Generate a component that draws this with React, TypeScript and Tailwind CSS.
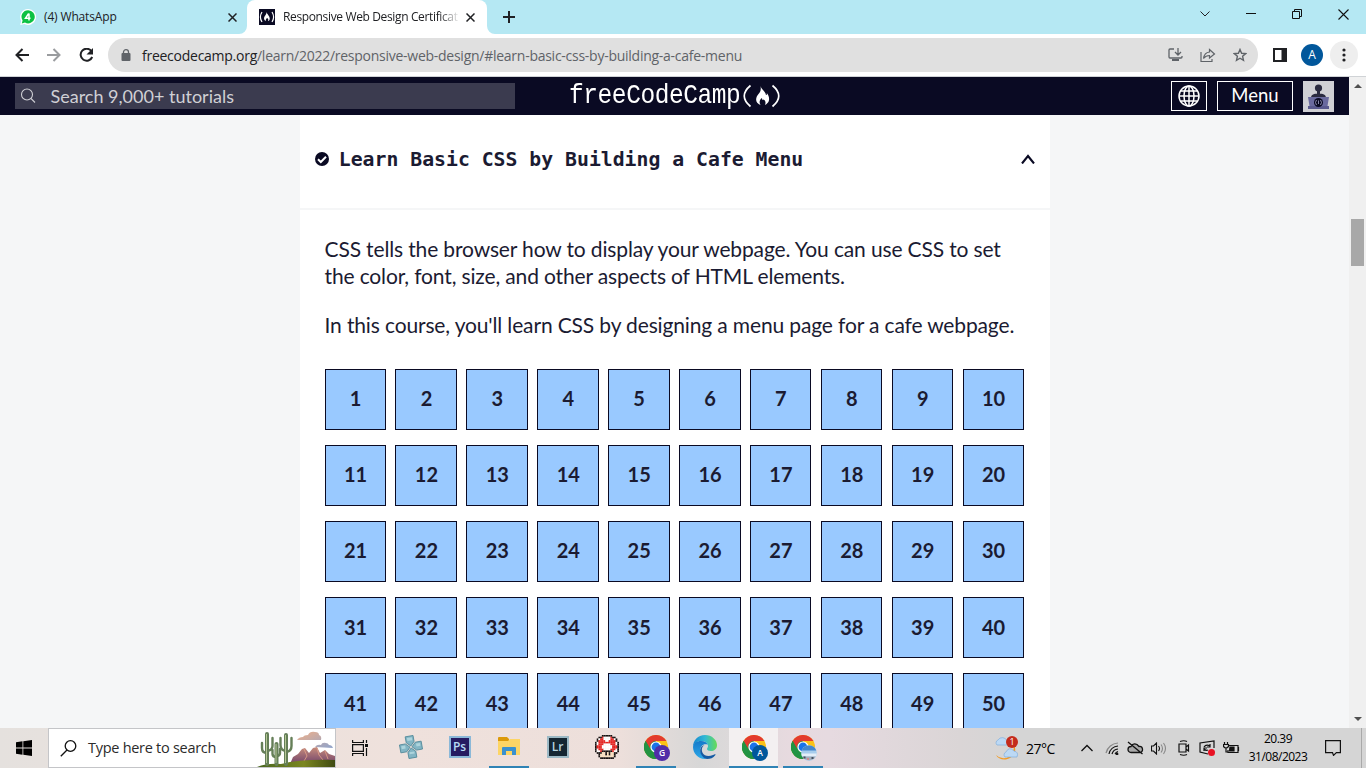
import React from "react";

const ui = "font-['Open_Sans','Noto_Sans',sans-serif]";
const lato = "font-[Lato,sans-serif]";

function TabStrip() {
  return (
    <div className={`flex h-[34px] w-full bg-[#b5e8f3] ${ui} text-[12px] text-[#202124]`}>
      <div className="flex h-full w-[247px] items-center pl-[20px]">
        <svg width="16" height="16" viewBox="0 0 16 16">
          <path d="M8 0a8 8 0 1 1-3.6 15.1L.2 16l1-4A8 8 0 0 1 8 0z" fill="#fff" />
          <path d="M8.2 1.2a6.6 6.6 0 1 1-3.2 12.4l-3.2.9.8-3.1A6.6 6.6 0 0 1 8.200 1.200z" fill="#0cc143" />
          <path d="M8.700 4.500 5.500 9.200h5M9 4.500v7" fill="none" stroke="#fff" strokeWidth="1.500" />
        </svg>
        <span className="ml-[8px] w-[184px] whitespace-nowrap tracking-[-0.15px]">(4) WhatsApp</span>
        <CloseX />
      </div>
      <div className="relative flex h-full w-[240px] items-center rounded-t-[8px] bg-white pl-[12px]">
        <svg className="absolute bottom-0 -left-[8px]" width="8" height="8"><path d="M8 0v8H0a8 8 0 0 0 8-8z" fill="#fff" /></svg>
        <svg className="absolute bottom-0 -right-[8px]" width="8" height="8"><path d="M0 0v8h8a8 8 0 0 1-8-8z" fill="#fff" /></svg>
        <svg width="16" height="16" viewBox="0 0 16 16">
          <rect width="16" height="16" fill="#0a0a23" />
          <path d="M3 3Q-.2 8 3 13M13 3q3.200 5 0 10" fill="none" stroke="#fff" strokeWidth="1.200" />
          <path d="M7.500 3c.5 2.500 3.800 4.300 3.200 7.200-.2 1-1 1.800-1.700 1.800.8-1.200.2-2.500-1-3-.9 1-1.600 2 -1 3-3-1.200-2-4.500-.4-6C7.300 5 7.600 4 7.500 3z" fill="#fff" />
        </svg>
        <div className="ml-[8px] w-[177px] whitespace-nowrap tracking-[-0.36px] [mask-image:linear-gradient(to_right,black_88%,transparent)]">
          Responsive Web Design Certificat
        </div>
        <div className="ml-[6px]"><CloseX /></div>
      </div>
      <svg className="ml-[16px] mt-[11px]" width="12" height="12"><path d="M6 0v12M0 6h12" stroke="#202124" strokeWidth="2" /></svg>
      <div className="ml-auto flex h-[28px] items-center pr-[17px]">
        <svg className="mr-[36px]" width="10" height="6"><path d="M.5.500 5 5 9.500.500" fill="none" stroke="#202124" /></svg>
        <svg className="mr-[36px]" width="10" height="2"><path d="M0 .500h10" stroke="#111" /></svg>
        <svg className="mr-[36px]" width="10" height="10"><path d="M.5 2.500h7v7h-7zM2.500 2.500v-2h7v7h-2" fill="none" stroke="#111" /></svg>
        <svg width="11" height="11"><path d="m.5.500 10 10m0-10-10 10" stroke="#111" strokeWidth="1.100" /></svg>
      </div>
    </div>
  );
}

function CloseX() {
  return <svg width="9" height="9"><path d="m.5.500 8 8m0-8-8 8" stroke="#202124" strokeWidth="1.500" /></svg>;
}

function Toolbar() {
  return (
    <div className="flex h-[43px] w-full items-center border-b border-[#d0d3d6] bg-white pl-[15px]">
      <svg width="14" height="14"><path d="M14 7H1.500M7.500 1l-6 6 6 6" fill="none" stroke="#202124" strokeWidth="2" /></svg>
      <svg className="ml-[18px]" width="14" height="14"><path d="M0 7h12.500M6.500 1l6 6-6 6" fill="none" stroke="#9a9c9f" strokeWidth="2" /></svg>
      <svg className="ml-[18px]" width="15" height="15"><path d="M12.500 3.200A6 6 0 1 0 13.200 9" fill="none" stroke="#202124" strokeWidth="2" /><path d="M14 0v6.500H7.500z" fill="#202124" /></svg>
      <div className={`ml-[14px] flex h-[34px] w-[1150px] items-center rounded-full bg-[#e0e0e0] pl-[13px] ${ui}`}>
        <svg width="10" height="12" viewBox="0 0 10 12"><rect x=".5" y="4" width="9" height="8" rx="1" fill="#5f6368" /><path d="M2.500 5V3a2.500 2.300 0 0 1 5 0v2" fill="none" stroke="#5f6368" strokeWidth="1.300" /></svg>
        <span className="ml-[11px] whitespace-nowrap text-[14px] tracking-[-0.26px] text-[#5f6368]"><span className="text-[#202124]">freecodecamp.org</span>/learn/2022/responsive-web-design/#learn-basic-css-by-building-a-cafe-menu</span>
        <div className="ml-auto flex items-center pr-[11px] text-[#5f6368]">
          <svg width="15" height="14" fill="none" stroke="currentColor" strokeWidth="1.300"><path d="M6 1H2Q1 1 1 2v7q0 1 1 1h11q1 0 1-1V8M10 0v6M7 4l3 3 3-3" /><path d="M4 12h7" strokeWidth="2" /></svg>
          <svg className="ml-[17px]" width="16" height="15" fill="none" stroke="currentColor" strokeWidth="1.200"><path d="M1 4v9.500h11V11M9.500 1.500l5 4.500-5 4V7.500c-3 0-4.500 1-6 3 .5-3.500 2-6 6-6.500z" /></svg>
          <svg className="ml-[17px]" width="14" height="14" viewBox="0 0 14 14" fill="none" stroke="currentColor" strokeWidth="1.400"><path d="m7 1.500 1.600 3.800 4.100.3-3.100 2.700.9 4L7 10.200l-3.500 2.100.9-4L1.300 5.600l4.100-.3z" /></svg>
        </div>
      </div>
      <svg className="ml-[15px]" width="14" height="14"><path d="M1 1h12v12H1z" fill="none" stroke="#202124" strokeWidth="2" /><path d="M8.500 1H14v12H8.500z" fill="#202124" /></svg>
      <div className={`ml-[14px] flex size-[22px] items-center justify-center rounded-full bg-[#01579b] text-[12px] text-white ${ui}`}>A</div>
      <div className="ml-[7px] flex size-[28px] items-center justify-center rounded-full bg-[#eeeeee]">
        <svg width="4" height="14" fill="#202124"><circle cx="2" cy="2" r="1.600" /><circle cx="2" cy="7" r="1.600" /><circle cx="2" cy="12" r="1.600" /></svg>
      </div>
    </div>
  );
}

function NavBar() {
  return (
    <div className={`flex h-[38px] w-full items-center bg-[#0a0a23] text-white ${lato}`}>
      <div className="ml-[15px] flex h-[26px] w-[500px] items-center bg-[#3b3b4f] pl-[5px] text-[18px] text-[#d0d0d5]">
        <svg width="16" height="16" fill="none" stroke="#d0d0d5" strokeWidth="1.100"><circle cx="7" cy="6.500" r="5.500" /><path d="m11 10.500 4 4" /></svg>
        <span className="ml-[14.500px] whitespace-nowrap">Search 9,000+ tutorials</span>
      </div>
      <div className="ml-[54px] flex h-full w-[212px] items-center">
        <span className="w-[173px] origin-center scale-y-[1.120] whitespace-nowrap font-['Liberation_Mono',monospace] text-[24.500px] leading-none tracking-[-0.420px]">freeCodeCamp</span>
        <svg className="mt-[-1px]" width="39" height="26" viewBox="0 0 39 26">
          <path d="M8.500 2.500Q-4 13 8.500 23.500M30.500 2.500q12.500 10.500 0 21" fill="none" stroke="#fff" strokeWidth="1.700" />
          <path d="M18.500 3c1 3.500 5 6 5.500 9 1 .3 1-1 .7-2 2.500 3 3.500 7 .8 10-.8.900-1.500 1.500-2.500 2 1-2.500.5-4.500-1.500-5.500-.5 1-1.500.5-1.500-1.500-2 1.500-3 3.500-2 6 .2.500.5.800.8 1.200-6-2-5.500-7.500-2.500-11 2-2.300 3-4.500 2.200-8.200z" fill="#fff" />
        </svg>
      </div>
      <div className="ml-[390px] flex h-[30px] w-[36px] items-center justify-center border border-white">
        <svg width="22" height="22" viewBox="0 0 22 22" fill="none" stroke="#fff" strokeWidth="1.500"><circle cx="11" cy="11" r="10" /><ellipse cx="11" cy="11" rx="5" ry="10" /><path d="M11 1v20M1 11h20M2.500 6h17M2.500 16h17" /></svg>
      </div>
      <div className="ml-[10px] flex h-[30px] w-[76px] items-center justify-center border border-white pb-px text-[18.500px]">Menu</div>
      <div className="ml-[10px] h-[31px] w-[31px] bg-[#d0d0d5]">
        <svg width="31" height="31" viewBox="0 0 31 31">
          <circle cx="15.500" cy="7" r="3.600" fill="#2a2a40" /><path d="M14 9h3v4h-3zM8 17c0-4 3-4 7.500-4.500C20 13 23 13 23 17z" fill="#2a2a40" />
          <path d="M5 16h21l-1.500 9h-18z" fill="#6a6a9e" /><path d="M5 25h21v3H5z" fill="#5a5a8e" />
          <circle cx="15.500" cy="21.500" r="4.500" fill="#0a0a23" /><path d="M13.500 19q-2 2.500 0 5M17.500 19q2 2.500 0 5M15.500 19.500v3.500" fill="none" stroke="#aaaacb" strokeWidth=".8" />
        </svg>
      </div>
      <div className="ml-auto flex h-full w-[17px] justify-center bg-[#f0f0f0] pt-[7px]"><svg width="8" height="4"><path d="m0 4 4-4 4 4z" fill="#505050" /></svg></div>
    </div>
  );
}

const numbers = Array.from({ length: 50 }, (_, i) => i + 1);

function Course() {
  return (
    <div className={`flex h-[613px] w-full overflow-hidden bg-[#f5f6f7] text-[#1b1b32] ${lato}`}>
      <div className="ml-[300px] h-full w-[750px] overflow-hidden bg-white">
        <div className="flex h-[95px] items-start border-b-2 border-[#f5f6f7] pl-[15px] pt-[31px]">
          <svg className="mt-[6px]" width="14" height="14"><circle cx="7" cy="7" r="7" fill="#0a0a23" /><path d="m3 7.300 2.800 2.700L11 4.800" fill="none" stroke="#fff" strokeWidth="2" /></svg>
          <h3 className="ml-[9.800px] whitespace-nowrap pt-px font-['DejaVu_Sans_Mono',monospace] text-[19.800px] font-bold leading-[26px]">Learn Basic CSS by Building a Cafe Menu</h3>
          <svg className="ml-auto mr-[15px] mt-[8px]" width="14" height="10"><path d="M1 9.500 7 2l6 7.500" fill="none" stroke="#0a0a23" strokeWidth="2.100" /></svg>
        </div>
        <div className="pl-[24.500px] pt-[25px]">
          <p className="whitespace-nowrap text-[21px] leading-[27px] tracking-[-0.142px]">CSS tells the browser how to display your webpage. You can use CSS to set<br />the color, font, size, and other aspects of HTML elements.</p>
          <p className="mt-[22px] whitespace-nowrap text-[21px] leading-[27px] tracking-[-0.142px]">In this course, you'll learn CSS by designing a menu page for a cafe webpage.</p>
          <div className="mt-[30.700px] grid w-[699.750px] grid-cols-[repeat(10,61.650px)] justify-between gap-y-[15.150px]">
            {numbers.map((n) => (
              <div key={n} className="flex h-[61px] items-center justify-center border border-[#0a0a23] bg-[#99c9ff] pb-[2px] pl-[0.500px] text-[20px] font-bold">{n}</div>
            ))}
          </div>
        </div>
      </div>
      <div className="ml-auto flex h-full w-[17px] flex-col items-center bg-[#f0f0f0] pt-[104px]">
        <div className="h-[47px] w-[13px] bg-[#a8a8a8]" />
        <svg className="mb-[7px] mt-auto" width="8" height="4"><path d="m0 0 4 4 4-4z" fill="#505050" /></svg>
      </div>
    </div>
  );
}

function Slot({ children, open, active }: { children: React.ReactNode; open?: boolean; active?: boolean }) {
  return (
    <div className={`flex h-full w-[49px] flex-col items-center ${active ? "bg-[#f3f0f1]" : ""}`}>
      <div className="flex h-[38px] items-center justify-center">{children}</div>
      {open && <div className={`h-[2px] bg-[#2f83b5] ${active ? "w-full" : "w-[40px]"}`} />}
    </div>
  );
}

function Chrome({ badge, color }: { badge?: string; color?: string }) {
  return (
    <svg className="ml-[2px] mt-px" width="26" height="26" viewBox="0 0 26 26">
      <circle cx="12" cy="12" r="12" fill="#fbc116" />
      <path d="M1.600 6A12 12 0 0 0 12 24l5.200-9L12 12V6z" fill="#229342" />
      <path d="M1.600 6A12 12 0 0 1 22.400 6H12a6 6 0 0 0-5.200 9z" fill="#e33b2e" />
      <path d="M1.600 6 6.800 15q2 3.500 5.200 3l-1 6A12 12 0 0 1 1.600 6z" fill="#229342" />
      <circle cx="12" cy="12" r="5.600" fill="#fff" /><circle cx="12" cy="12" r="4.400" fill="#1a73e8" />
      {badge ? (
        <><circle cx="18" cy="18" r="8" fill={color} /><text x="18" y="21" textAnchor="middle" fontSize="8.500" fontWeight="600" fontFamily="Open Sans" fill="#fff">{badge}</text></>
      ) : (
        <><circle cx="18" cy="18" r="7.800" fill="#a8cdec" /><path d="M10.700 15.500a7.800 7.800 0 0 1 14.600 0z" fill="#4386cd" /><path d="M10.300 18.500h15.400l-.5 3H11z" fill="#e3eef8" /><path d="M11.200 21.500h13.600a8 8 0 0 1-13.600 0z" fill="#a3adbb" /><path d="M12.500 21.500h2v2h-2zM20.500 22h2v2h-2z" fill="#44515f" /><path d="M16 23h2v2h-2z" fill="#d08b92" /></>
      )}
    </svg>
  );
}

const mushroom = [
  "....KKKKKK....",
  "..KKRWWWWRKK..",
  ".KWRRWWWWRRWK.",
  ".KRRRRWWRRRRK.",
  "KWRRRRRRRRRRWK",
  "KWRRRWWWWRRRWK",
  "KRRRWWWWWWRRRK",
  "KRRRWWWWWWRRRK",
  "KWRRRWWWWRRRWK",
  "KWWRKKKKKKRWWK",
  ".KKKFFKFKFFKK.",
  "..KFFFKFKFFK..",
  "..KFFFFFFFFK..",
  "...KKKKKKKK...",
];
const pixelColors: Record<string, string> = { K: "#171212", R: "#e52320", W: "#fff", F: "#f8dfbf" };

function Mushroom() {
  return (
    <svg width="24" height="24" viewBox="0 0 14 14">
      {mushroom.flatMap((row, y) => row.split("").map((c, x) => c === "." ? null : <rect key={`${x}-${y}`} x={x} y={y} width="1.030" height="1.030" fill={pixelColors[c]} />))}
    </svg>
  );
}

function Desert() {
  return (
    <svg width="78" height="38" viewBox="0 0 78 38">
      <defs><linearGradient id="mt" x2="0" y2="1"><stop stopColor="#c78c7b" /><stop offset="1" stopColor="#71436b" /></linearGradient><linearGradient id="cl" x2="1" y2="1"><stop stopColor="#efb08a" /><stop offset="1" stopColor="#8fa4cc" /></linearGradient><linearGradient id="gr" x2="1"><stop stopColor="#47651f" /><stop offset=".6" stopColor="#7b8620" /><stop offset="1" stopColor="#3f4a12" /></linearGradient></defs>
      <path d="M40 11q2-3 6-3 1-2 5-2 2-4 7-3 4 0 4 3 3 1 2 5zM58 18q2-3 6-2 1-3 5-2 2 0 3 2 3 0 4 3z" fill="url(#cl)" />
      <path d="m33 35 3-7 5-3 4-5 3-1 4 5 4-5 4-1 3 6 5-3 4 4 6 2v8z" fill="url(#mt)" />
      <path d="m47 20 3 7-3 5M60 19l2 7 4 5M68 22l3 8" fill="none" stroke="#dc9c86" strokeWidth=".9" />
      <path d="M0 38q10-4 24-3 20-5 54-4v7z" fill="url(#gr)" />
      <g transform="translate(2 0)"><g fill="none" stroke="#657f58" strokeLinecap="round"><path d="M8 35V5M27 35V6M17.500 35V15" strokeWidth="4" /><path d="M3 14v5q0 5 5 5M13.500 9v8q0 4-5 5M21.500 9v7q0 5 5 6M32.500 9v8q0 5-5 6M13.500 21v4q0 3 4 3M21 20v4q0 3-4 3" strokeWidth="2.400" /></g>
      <path d="M7.500 5v29M26.500 6v28M17 15v19" stroke="#b5c795" fill="none" strokeWidth="1" /></g>
    </svg>
  );
}

function Edge() {
  return (
    <svg width="24" height="24" viewBox="0 0 24 24">
      <defs><linearGradient id="eg" x2="1"><stop stopColor="#1686cf" /><stop offset=".5" stopColor="#30b9d5" /><stop offset="1" stopColor="#68dc55" /></linearGradient><linearGradient id="eb" x2="0" y2="1"><stop stopColor="#1479ca" /><stop offset="1" stopColor="#2da9e8" /></linearGradient></defs>
      <path d="M0 12C0 5 5 0 12 0s12 5 12 10c0 4-3 6-6 6-2.500 0-4-.8-4-2 0-.8 1-1.200 1-3C15 8 12 6 8.500 6 4 6 .5 9 0 12z" fill="url(#eg)" />
      <path d="M0 12c.5-4 4-6 8-6 3.500 0 6 1.600 6.800 3.800C10 8 6.500 12 7.500 16.500 8.200 20 11 23 14 23.800 6 25 0 19 0 12z" fill="url(#eb)" />
      <path d="M9.500 12c-2 4 .5 9 6 9 3 0 5-1 6.300-1.700.5-.3 1 .2.6.7C20 23 17.500 24 14 24 9 23 5.500 17 8 12.500 9 11 10 10.500 11.500 10c-.8.500-1.500 1.200-2 2z" fill="#155aa3" />
    </svg>
  );
}

function Taskbar() {
  return (
    <div className={`flex h-[40px] w-full bg-[linear-gradient(90deg,#e5e1de_0px,#efe1dc_400px,#eddfdb_620px,#d7d7d7_700px,#dcd9da_730px,#e7dadf_790px,#e6dae0_830px,#dad5d6_960px,#d5d5d5_1010px)] ${ui} text-black`}>
      <div className="flex w-[48px] items-center justify-center">
        <svg width="16" height="16"><path d="M0 2.300 6.500 1.300v6.200H0zM7.300 1.200 16 0v7.500H7.300zM0 8.400h6.500v6.300L0 13.800zM7.300 8.400H16V16l-8.700-1.200z" fill="#000" /></svg>
      </div>
      <div className="flex w-[288px] items-center border border-[#c4c5c8] bg-white pl-[11px]">
        <svg width="17" height="17" fill="none" stroke="#111" strokeWidth="1.300"><circle cx="10.500" cy="6" r="5.300" /><path d="M7 10 .8 16.200" /></svg>
        <span className="ml-[11px] whitespace-nowrap text-[14.500px] tracking-[-0.280px] text-[#2b2b2b]">Type here to search</span>
        <div className="ml-auto"><Desert /></div>
      </div>
      <div className="flex w-[50px] items-center pl-[16px]">
        <svg width="17" height="16" fill="none" stroke="#111" strokeWidth="1.200"><path d="M.6 0v2.500h10.800V0M.6 16v-2.500h10.800V16M.6 4.700h10.800v6.600H.6zM14.500 0v3M14.500 8v8" /><path d="M13 4h3v3h-3z" fill="#111" stroke="none" /></svg>
      </div>
      <Slot>
        <svg width="24" height="24" viewBox="0 0 24 24"><g transform="rotate(-10 12 12)" fill="#83b5c4" stroke="#4d8697" strokeWidth=".8"><path d="M8 1h8v6l-4 4-4-4zM23 8v8h-6l-4-4 4-4zM8 23h8v-6l-4-4-4 4zM1 8v8h6l4-4-4-4z" /><path d="M9.500 2.500h5v3h-5zM2.500 9.500h4v3h-4zM17.500 9.500h4v3h-4zM9.500 17h5v2h-5z" fill="#add4dc" stroke="none" /></g></svg>
      </Slot>
      <Slot><div className="flex size-[22px] items-center justify-center border-2 border-[#8bb8d8] bg-[#261b61] text-[12px] font-semibold text-[#b8dcf5]">Ps</div></Slot>
      <Slot open>
        <svg width="22" height="20" viewBox="0 0 22 20"><path d="M0 1q0-1 1-1h8l2 2v4H0z" fill="#dc9a0b" /><path d="M0 4h10l2-2h10v16H0z" fill="#fdd565" /><path d="M4 18v-7q0-1 1-1h12q1 0 1 1v7h-4v-4H8v4z" fill="#3b91cf" /></svg>
      </Slot>
      <Slot><div className="flex size-[22px] items-center justify-center border-2 border-[#9cb9c5] bg-[#152632] text-[12px] font-semibold text-[#b6d3df]">Lr</div></Slot>
      <Slot><Mushroom /></Slot>
      <Slot open><Chrome badge="G" color="#512da8" /></Slot>
      <Slot><Edge /></Slot>
      <Slot open active><Chrome badge="A" color="#01579b" /></Slot>
      <Slot open><Chrome /></Slot>
      <div className="ml-auto flex w-[372px] items-center">
        <div className="relative">
          <svg width="25" height="23" viewBox="0 0 25 23"><path d="M17 4A10 10 0 0 1 2 18c3 6 15 7 19-3 1-4-1-9-4-11z" fill="#f49b23" /><path d="M3 8a3 3 0 0 1 1-5 5 5 0 0 1 9 1q3 1 2 4zM11 20a3 3 0 0 1 1-5q3-6 8-1 5 1 3 6z" fill="#bcd9f5" stroke="#83afdc" strokeWidth=".7" /></svg>
          <div className="absolute -top-[1px] left-[12px] flex size-[12px] items-center justify-center rounded-full bg-[#c42b1c] text-[9px] text-white">1</div>
        </div>
        <span className="ml-[7px] w-[55px] whitespace-nowrap text-[14px] tracking-[-0.500px]">27°C</span>
        <svg width="12" height="8"><path d="m.5 7 5.500-5.500L11.500 7" fill="none" stroke="#111" strokeWidth="1.300" /></svg>
        <svg className="ml-[12px]" width="14" height="14" fill="none" stroke="#111" strokeWidth="1.200"><path d="M1 12A13 13 0 0 1 13 2" stroke="#888" /><path d="M4 13A10 10 0 0 1 13 5M7 13a7 7 0 0 1 6-5M10 13q1-2 3-2.500" /><circle cx="12" cy="13" r=".8" fill="#111" /></svg>
        <svg className="ml-[8px]" width="17" height="14" fill="#a9a9a9" stroke="#111" strokeWidth="1.300"><path d="M4 11.500a3 3 0 0 1 0-6q2-4 6-2l2 2a3 3 0 0 1 1 6zM1 1l14.500 12" /></svg>
        <svg className="ml-[7px]" width="17" height="13" fill="none" stroke="#111" strokeWidth="1.100"><path d="M.5 4h2l3-3v11l-3-3h-2zM7.500 4q2 2.500 0 5" /><path d="M10 2.500q3 4 0 8M12.500 1q4 5.500 0 11" stroke="#888" /></svg>
        <svg className="ml-[10px]" width="12" height="16" fill="none" stroke="#111" strokeWidth="1.200"><path d="M2 1.500q4-1.500 7 0M2 14.500q4 1.500 7 0M1 4h7v8H1zM8 7l2.500-2v6L8 9" /></svg>
        <svg className="ml-[9px]" width="17" height="16" fill="none" stroke="#111" strokeWidth="1.200"><path d="M9 14 1 12V3l14-2v7M5 7q2-3 6-1M11 4v3H8M5 11V8h3M5 9q2 2 4 1" /><circle cx="12.500" cy="12.500" r="3.500" fill="#e81123" stroke="none" /></svg>
        <svg className="ml-[7px]" width="17" height="12" fill="none" stroke="#111" strokeWidth="1.200"><path d="M6 3.500h9v7H5V8M15.500 5v4M1.500 0v2M4.500 0v2M.5 2.500h5v2q-2.500 3-5 0zM3 6v4h2" /><path d="M7 5h4v4H6.500z" fill="#111" /></svg>
        <div className="ml-[6px] flex w-[64px] flex-col items-center whitespace-nowrap text-[12px] leading-[18px] tracking-[-0.520px]"><span>20.39</span><span>31/08/2023</span></div>
        <svg className="ml-[15px]" width="16" height="16" fill="none" stroke="#111" strokeWidth="1.200"><path d="M.6.600h14.800v12h-4L8.500 15.400l-1-2.800H.6z" /></svg>
        <div className="ml-auto mr-[4px] h-full w-px bg-[#a9a9a9]" />
      </div>
    </div>
  );
}

export default function App() {
  return (
    <div className="flex h-[768px] w-[1366px] flex-col overflow-hidden bg-white">
      <TabStrip />
      <Toolbar />
      <NavBar />
      <Course />
      <Taskbar />
    </div>
  );
}
